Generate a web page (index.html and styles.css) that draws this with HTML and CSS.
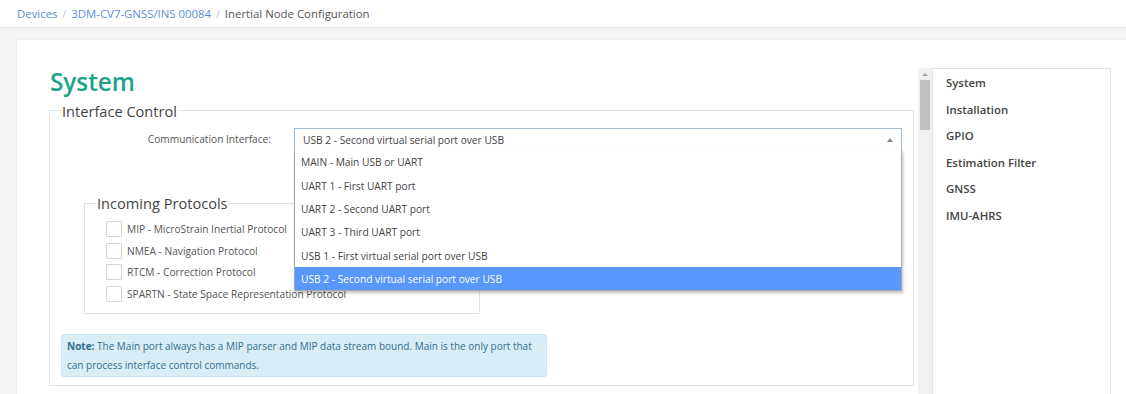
FILE: index.html
```html
<!DOCTYPE html>
<html lang="en">
<head>
    <meta charset="UTF-8">
    <title>Inertial Node Configuration</title>
    <link rel="stylesheet" href="styles.css">
</head>
<body>

    <!-- Breadcrumb -->
    <div class="topbar">
        <a href="#">Devices</a>
        <span class="sep">/</span>
        <a href="#">3DM-CV7-GNSS/INS 00084</a>
        <span class="sep">/</span>
        <span class="current">Inertial Node Configuration</span>
    </div>

    <div class="page">
        <div class="card">

            <div class="content">
                <h1 class="title">System</h1>

                <fieldset class="group">
                    <legend>Interface Control</legend>

                    <div class="form-row">
                        <label class="form-label">Communication Interface:</label>
                        <div class="select-wrap">
                            <div class="select-box">
                                <span>USB 2 - Second virtual serial port over USB</span>
                                <span class="arrow"></span>
                            </div>
                            <!-- open dropdown -->
                            <ul class="select-list">
                                <li>MAIN - Main USB or UART</li>
                                <li>UART 1 - First UART port</li>
                                <li>UART 2 - Second UART port</li>
                                <li>UART 3 - Third UART port</li>
                                <li>USB 1 - First virtual serial port over USB</li>
                                <li class="active">USB 2 - Second virtual serial port over USB</li>
                            </ul>
                        </div>
                    </div>

                    <fieldset class="group sub">
                        <legend>Incoming Protocols</legend>
                        <label class="check"><span class="box"></span>MIP - MicroStrain Inertial Protocol</label>
                        <label class="check"><span class="box"></span>NMEA - Navigation Protocol</label>
                        <label class="check"><span class="box"></span>RTCM - Correction Protocol</label>
                        <label class="check"><span class="box"></span>SPARTN - State Space Representation Protocol</label>
                    </fieldset>

                    <div class="note">
                        <b>Note:</b> The Main port always has a MIP parser and MIP data stream bound. Main is the only port that can process interface control commands.
                    </div>
                </fieldset>
            </div>

            <div class="scrollbar">
                <span class="up"></span>
                <span class="thumb"></span>
            </div>

            <ul class="side-nav">
                <li>System</li>
                <li>Installation</li>
                <li>GPIO</li>
                <li>Estimation Filter</li>
                <li>GNSS</li>
                <li>IMU-AHRS</li>
            </ul>

        </div>
    </div>

</body>
</html>
```

FILE: styles.css
```css
body {
    font-family: "Open Sans", "Liberation Sans", sans-serif;
    background-color: #f4f4f4;
    color: #555;
    margin: 0;
    padding: 0;
    overflow: hidden;
}

.topbar {
    height: 27px;
    line-height: 27px;
    background-color: white;
    border-bottom: 1px solid #e6e6e6;
    padding-left: 17px;
    font-size: 11.4px;
}

.topbar a {
    color: #5b8fd6;
    text-decoration: none;
}

.topbar .sep {
    color: #c8c8c8;
    margin: 0 1.8px;
}

.topbar .current {
    color: #555;
}

.page {
    padding: 12px 0 0 17px;
}

.card {
    display: flex;
    align-items: flex-start;
    background-color: white;
    box-shadow: 0 0 2px rgba(0, 0, 0, 0.08);
    padding: 28px 15px 30px 32px;
}

.content {
    flex: 1;
}

.title {
    margin: 0 0 5px 1px;
    font-size: 24.3px;
    line-height: 27.5px;
    font-weight: 600;
    color: #1aa588;
}

.group {
    margin: 0;
    border: 1px solid #e3e3e3;
    padding: 0 11px 8px 11px;
}

.group legend {
    font-size: 14.6px;
    line-height: 20.4px;
    color: #444;
    padding: 0 1px;
}

.form-row {
    display: flex;
    align-items: center;
    margin-top: 7px;
    font-size: 10.2px;
}

.form-label {
    width: 210px;
    padding-right: 23px;
    text-align: right;
}

.select-wrap {
    position: relative;
    flex: 1;
}

.select-box {
    display: flex;
    align-items: center;
    justify-content: space-between;
    height: 20px;
    padding: 1px 8px 0 8px;
    box-sizing: content-box;
    border: 1px solid #9cbbd6;
    border-bottom-color: #c9d6e0;
    color: #444;
}

.select-box .arrow {
    width: 0;
    height: 0;
    border-left: 3px solid transparent;
    border-right: 3px solid transparent;
    border-bottom: 4px solid #888;
}

.select-list {
    position: absolute;
    top: 22px;
    left: 0;
    right: 0;
    margin: 0;
    padding: 0;
    list-style: none;
    background-color: white;
    border: 1px solid #aaa;
    border-top: none;
    box-shadow: 1px 2px 3px rgba(0, 0, 0, 0.25);
    z-index: 2;
}

.select-list li {
    padding: 5.4px 6px 3px 6px;
    line-height: 15px;
    color: #444;
}

.select-list li.active {
    background-color: #5897fb;
    color: white;
}

.group.sub {
    width: 372px;
    margin: 42px 0 0 23px;
    padding: 5px 11px 9px 11px;
}

.check {
    display: flex;
    align-items: center;
    height: 21.5px;
    padding-left: 10px;
    font-size: 10.2px;
    color: #555;
}

.check .box {
    width: 14px;
    height: 14px;
    border: 1px solid #d6d6d6;
    border-radius: 1px;
    margin-right: 5px;
}

.note {
    width: 474px;
    margin-top: 20px;
    padding: 1.5px 5px 1.5px 5px;
    background-color: #d9edf7;
    border: 1px solid #c6e7f2;
    border-radius: 3px;
    color: #31708f;
    font-size: 10px;
    line-height: 19px;
}

.note b {
    font-weight: 700;
}

.scrollbar {
    position: relative;
    width: 14px;
    height: 340px;
    margin-left: 4px;
    background-color: #f1f1f1;
}

.scrollbar .up {
    position: absolute;
    top: 5px;
    left: 4px;
    border-left: 3px solid transparent;
    border-right: 3px solid transparent;
    border-bottom: 3px solid #a3a3a3;
}

.scrollbar .thumb {
    position: absolute;
    top: 12px;
    left: 2px;
    width: 10px;
    height: 50px;
    background-color: #c1c1c1;
}

.side-nav {
    width: 164px;
    height: 340px;
    margin: 0;
    padding: 1px 0 0 13px;
    list-style: none;
    border: 1px solid #e3e3e3;
    box-sizing: content-box;
}

.side-nav li {
    font-size: 11.4px;
    font-weight: 600;
    color: #444;
    line-height: 26.5px;
}
```
